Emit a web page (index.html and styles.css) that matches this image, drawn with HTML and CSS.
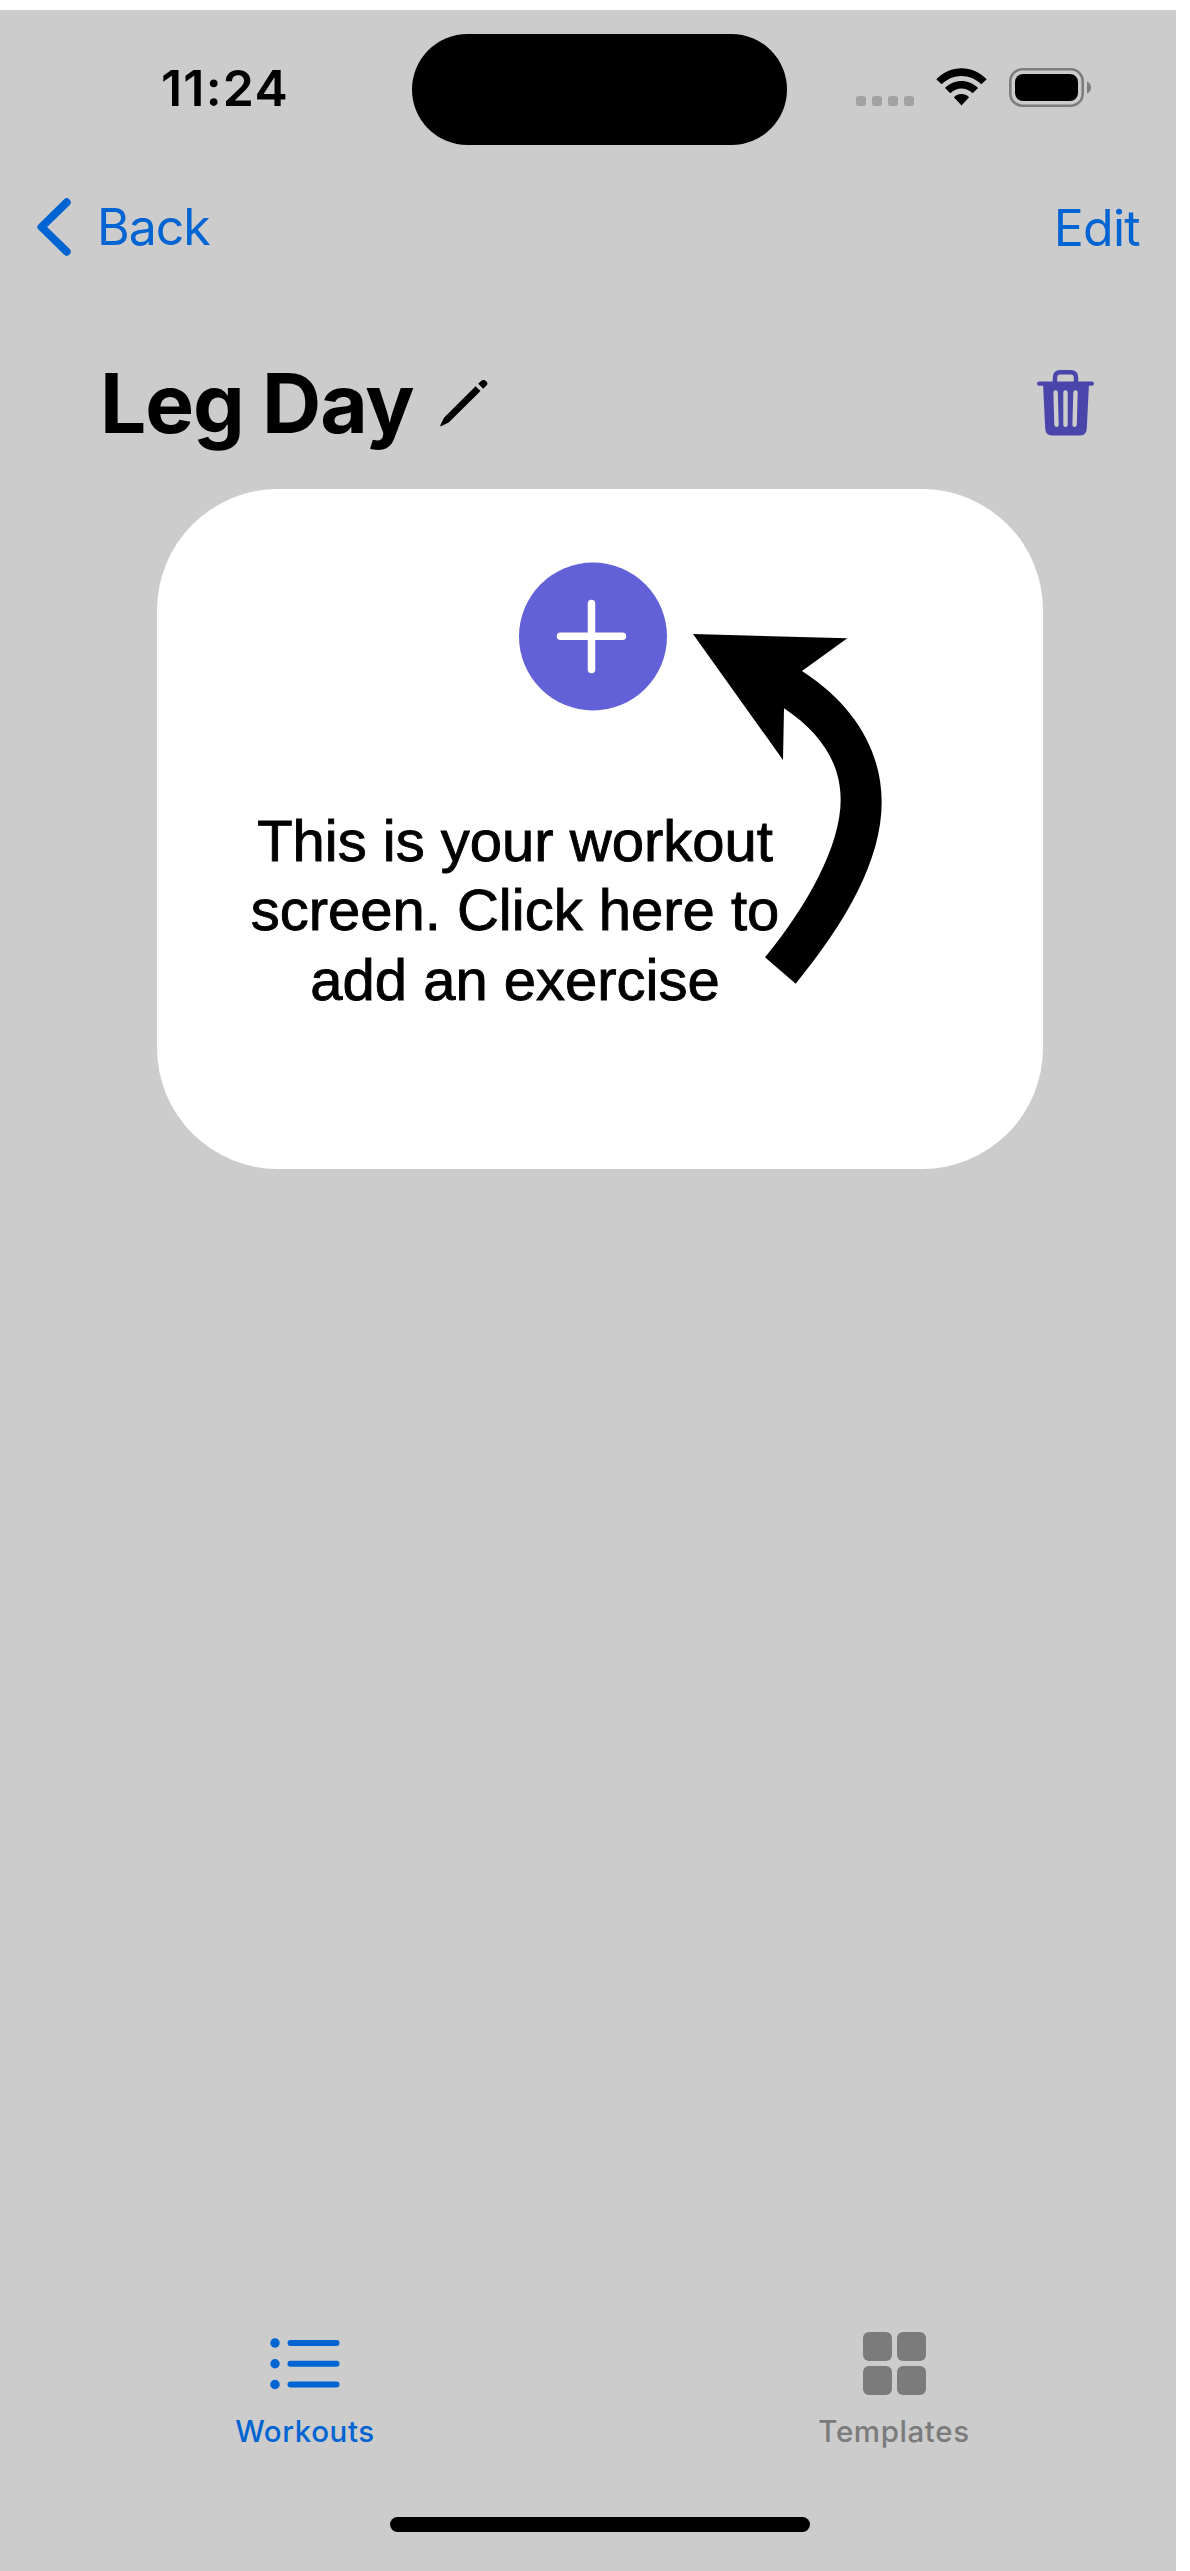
FILE: index.html
```html
<!DOCTYPE html>
<html lang="en">
<head>
<meta charset="utf-8">
<title>Leg Day</title>
<link rel="stylesheet" href="styles.css">
</head>
<body>
<div class="screen">
  <header class="status">
    <div class="clock">11:24</div>
    <div class="island"></div>
    <div class="indicators">
      <svg class="cellular" width="58" height="10" viewBox="0 0 58 10"><rect width="10" height="10" rx="3"/><rect x="16" width="10" height="10" rx="3"/><rect x="32" width="10" height="10" rx="3"/><rect x="48" width="10" height="10" rx="3"/></svg>
      <svg class="wifi" width="51" height="38" viewBox="0 0 51 38"><path d="M0.3 11.2C14.5-3.4 36.5-3.4 50.7 11.2L45.3 16.3C34.2 5.2 16.8 5.2 5.7 16.3ZM9 20C18.200 10.700 32.800 10.700 42 20L36.700 25.300C30.200 18.800 20.800 18.800 14.300 25.300ZM17.900 29.300C22 25 29 25 33.100 29.300L25.500 37.500Z"/></svg>
      <svg class="battery" width="83" height="39" viewBox="0 0 83 39"><rect x="1.300" y="1.300" width="72.400" height="36.400" rx="12" fill="none" stroke="#7d7d7d" stroke-width="2.600"/><rect x="6" y="6" width="63" height="27" rx="8"/><path d="M78 13.500C83.300 15 83.300 24 78 25.500Z" fill="#7d7d7d"/></svg>
    </div>
  </header>

  <nav class="nav">
    <a class="back"><svg width="34" height="58" viewBox="0 0 34 58"><path d="M29.700 4.300L4.500 29L29.700 53.700"/></svg><span>Back</span></a>
    <a class="edit">Edit</a>
  </nav>

  <div class="heading">
    <h1>Leg Day</h1>
    <svg class="pencil" width="48" height="48" viewBox="0 0 48 48"><path d="M0.300 46.200L4 38.800L35.600 7.200L40.500 12.100L8.700 43.500L1.500 47.100Q0 47.500 0.300 46.200ZM38.200 4.800L41 2Q43.700-0.200 46.200 2.200T46.200 6.800L43.200 9.700Z"/></svg>
    <svg class="trash" width="58" height="66" viewBox="0 0 58 66"><path class="lid" d="M2.200 13.600H54.800M18 12V7.500Q18 2.200 23.300 2.200H33.700Q39 2.200 39 7.500V12"/><path class="can" d="M6 13H52L49.800 58.500Q49.400 65.600 42.300 65.600H15.700Q8.600 65.600 8.200 58.500Z"/><path class="ribs" d="M18.600 22.500L19.500 54.700M28.500 22.500V54.700M38.500 22.500L37.600 54.700"/></svg>
  </div>

  <section class="card">
    <svg class="plus" width="148" height="149" viewBox="0 0 148 149"><circle cx="74" cy="74.500" r="74"/><path d="M41.500 74.200H103.500M72.500 41.500V107.500"/></svg>
    <p>This is your workout<br>screen. Click here to<br>add an exercise</p>
    <svg class="arrow" width="189" height="350" viewBox="100 102 567 1050"><path d="M100 102L563 115L427 213C590 318 666 460 666 606C666 780 560 965 408 1151L316 1072C445 915 543 735 543 600C543 490 485 400 373 325L370 480Z"/></svg>
  </section>

  <footer class="tabs">
    <a class="tab active">
      <svg width="70" height="64" viewBox="0 0 70 64"><circle cx="5" cy="11" r="4.700"/><circle cx="5" cy="31.700" r="4.700"/><circle cx="5" cy="52.500" r="4.700"/><path d="M20.500 11H66.500M20.500 31.700H66.500M20.500 52.500H66.500"/></svg>
      <span>Workouts</span>
    </a>
    <a class="tab">
      <svg width="63" height="64" viewBox="0 0 63 64"><rect width="29" height="29" rx="6"/><rect x="34" width="29" height="29" rx="6"/><rect y="34" width="29" height="29" rx="6"/><rect x="34" y="34" width="29" height="29" rx="6"/></svg>
      <span>Templates</span>
    </a>
  </footer>
  <div class="home"></div>
</div>
</body>
</html>
```
FILE: styles.css
```css
* { box-sizing: border-box; }
body { margin: 0; padding-top: 10px; background: #fff; font-family: Inter, "Liberation Sans", sans-serif; color: #000; }
svg { display: block; flex: none; overflow: visible; }
.screen { width: 1176px; height: 2561px; background: #ccc; display: flex; flex-direction: column; }

.status { height: 158px; display: grid; grid-template-columns: 412px 375px 1fr; align-items: center; }
.clock { padding-left: 161px; margin-top: -2px; font-size: 50px; line-height: 60px; font-weight: 600; letter-spacing: 1.200px; }
.island { height: 111px; border-radius: 56px; background: #000; }
.indicators { display: flex; align-items: flex-end; height: 39px; margin-top: -3px; padding-left: 69px; }
.cellular { fill: #a1a1a1; margin: 0 22px 1px 0; }
.wifi { margin: 0 22px 1px 0; }

.nav { height: 118px; display: flex; align-items: center; justify-content: space-between; padding: 0 36px 0 37px; color: #0064d2; font-size: 50px; line-height: 60px; letter-spacing: -1px; }
.back { display: flex; align-items: center; gap: 26px; }
.back path { fill: none; stroke: currentColor; stroke-width: 8; stroke-linecap: round; stroke-linejoin: round; }
.edit { padding-top: 2px; letter-spacing: -0.700px; }

.heading { height: 203px; padding: 31px 81px 0 100px; display: flex; align-items: center; }
h1 { margin: 2px 0 0; width: 315px; font-size: 82px; line-height: 98px; font-weight: 700; letter-spacing: -1.100px; white-space: nowrap; }
.pencil { margin-left: 25px; }
.trash { margin-left: auto; }
.lid { fill: none; stroke: #4945ab; stroke-width: 4.400; stroke-linecap: round; }
.can { fill: #4945ab; }
.ribs { fill: none; stroke: #ccc; stroke-width: 4.400; stroke-linecap: round; }

.card { position: relative; width: 886px; height: 680px; margin-left: 157px; padding-top: 72.500px; background: #fff; border-radius: 121px; }
.plus { margin-left: 362px; }
.plus circle { fill: #6361d8; }
.plus path { stroke: #fff; stroke-width: 7.500; stroke-linecap: round; }
.card p { margin: 95px 0 0 58px; width: 600px; text-align: center; font-family: "Liberation Sans", Arial, sans-serif; font-size: 58px; line-height: 69.500px; white-space: nowrap; -webkit-text-stroke: 0.900px #000; }
.arrow { position: absolute; left: 536.300px; top: 145px; }

.tabs { margin-top: auto; height: 160px; display: grid; grid-template-columns: 610px 568px; color: #7b7b7b; }
.tab { display: flex; flex-direction: column; align-items: center; gap: 17px; font-size: 29.500px; line-height: 36px; font-weight: 500; letter-spacing: 0.600px; fill: currentColor; }
.active { color: #0064d2; }
.active path { stroke: currentColor; stroke-width: 6; stroke-linecap: round; }
.home { width: 420px; height: 15px; border-radius: 8px; background: #000; margin: 25px 0 39px 390px; }
```
